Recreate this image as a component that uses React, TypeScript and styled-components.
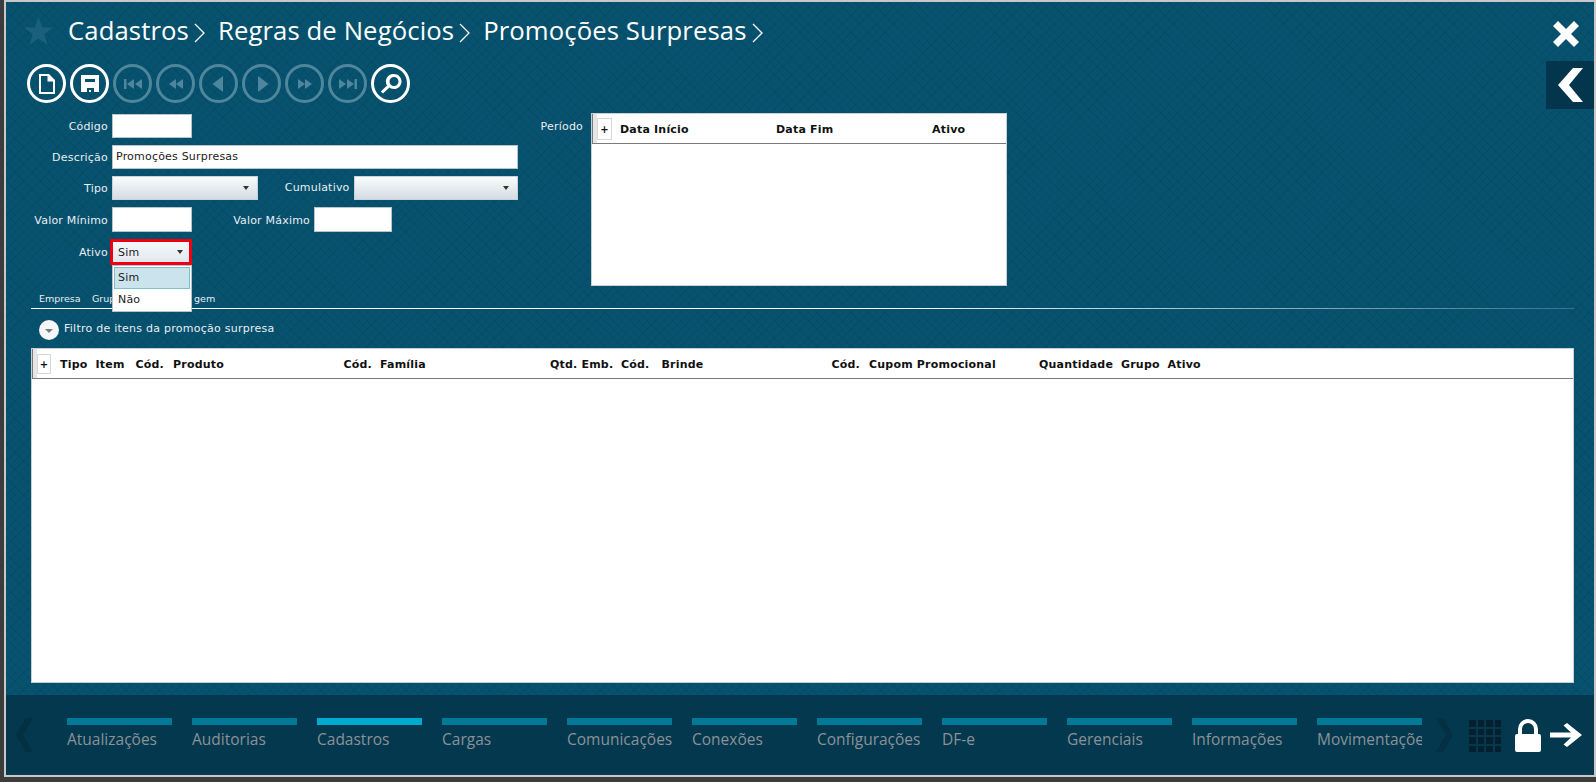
import * as React from 'react';
import styled, { createGlobalStyle } from 'styled-components';

const Global = createGlobalStyle`
  html, body { margin: 0; padding: 0; background: #3a3a3a; }
  * { box-sizing: border-box; }
`;

const Screen = styled.div`
  width: 1596px;
  height: 782px;
  padding: 0 0 5px 4px;
  background: #3c3c3c;
  font-family: 'DejaVu Sans', sans-serif;
  overflow: hidden;
`;
const Frame = styled.div`
  height: 100%;
  display: flex;
  flex-direction: column;
  border: 2px solid #c8c8c8;
  background-color: #06526f;
  background-image:
    repeating-linear-gradient(45deg, rgba(0, 40, 60, 0.11) 0 1px, transparent 1px 6px),
    repeating-linear-gradient(-45deg, rgba(0, 40, 60, 0.11) 0 1px, transparent 1px 6px);
`;
const Main = styled.div`
  flex: 1;
  position: relative;
  display: flex;
  flex-direction: column;
  padding: 0 20px 12px 25px;
  min-height: 0;
`;
const TitleBar = styled.div`
  height: 56px;
  display: flex;
  align-items: center;
  margin-left: -8px;
`;
const Crumb = styled.span`
  font-family: 'Open Sans', sans-serif;
  font-size: 25.7px;
  letter-spacing: 0.1px;
  color: #fff;
  margin-right: 5px;
`;
const CrumbSep = styled.svg`
  width: 11px;
  height: 20px;
  margin-right: 13px;
  margin-top: 6px;
  fill: none;
  stroke: #fff;
  stroke-width: 1.3;
`;
const Star = styled.svg`
  width: 31px;
  height: 31px;
  margin-right: 14px;
  margin-top: 3px;
  fill: #1a5f7c;
`;
const Toolbar = styled.div`
  display: flex;
  gap: 4px;
  height: 39px;
  margin-top: 6px;
  margin-left: -4px;
`;
const RoundButton = styled.button<{ $off?: boolean }>`
  width: 39px;
  height: 39px;
  padding: 0;
  border-radius: 50%;
  background: transparent;
  border: 3px solid ${p => (p.$off ? '#4f869c' : '#fff')};
  display: flex;
  align-items: center;
  justify-content: center;
  svg {
    display: block;
    fill: ${p => (p.$off ? '#4f869c' : '#fff')};
  }
`;
const CloseButton = styled.svg`
  position: absolute;
  top: 19px;
  right: 15px;
  width: 26px;
  height: 26px;
  fill: #fff;
`;
const SideTab = styled.div`
  position: absolute;
  top: 59px;
  right: 0;
  width: 48px;
  height: 48px;
  background: #03364c;
  display: flex;
  align-items: center;
  justify-content: center;
  svg {
    width: 25px;
    height: 34px;
    fill: #fff;
  }
`;
const Upper = styled.div`
  display: flex;
  height: 176px;
  margin-top: 10px;
`;
const FormCol = styled.div`
  width: 487px;
  display: flex;
  flex-direction: column;
  gap: 7px;
  padding-top: 1px;
`;
const FormRow = styled.div<{ $h: number }>`
  display: flex;
  align-items: center;
  height: ${p => p.$h}px;
`;
const Label = styled.label<{ $w?: number; $up?: boolean }>`
  width: ${p => p.$w ?? 81}px;
  padding-right: 4px;
  padding-top: ${p => (p.$up ? 0 : 1)}px;
  padding-bottom: ${p => (p.$up ? 2 : 0)}px;
  text-align: right;
  font-size: 11px;
  letter-spacing: 0.2px;
  color: #e8eef2;
  white-space: nowrap;
  flex: none;
`;
const TextBox = styled.div<{ $w: number }>`
  width: ${p => p.$w}px;
  height: 100%;
  background: #fff;
  border: 1px solid #b9c4cc;
  font-size: 11px;
  letter-spacing: 0.2px;
  line-height: 22px;
  padding-left: 3px;
  color: #222;
`;
const Select = styled.div<{ $w: number }>`
  width: ${p => p.$w}px;
  height: 100%;
  border: 1px solid #c8d2d8;
  background: linear-gradient(#fafcfc, #d3dde3);
  display: flex;
  align-items: center;
  justify-content: flex-end;
  padding-right: 8px;
`;
const Caret = styled.i`
  display: block;
  width: 0;
  height: 0;
  border-left: 3.5px solid transparent;
  border-right: 3.5px solid transparent;
  border-top: 4px solid #333;
`;
const AtivoSelect = styled.div`
  width: 82px;
  height: 26px;
  margin-left: -2px;
  border: 3px solid #ee0010;
  background: linear-gradient(#f6f8fb, #e2e8f0);
  display: flex;
  align-items: center;
  justify-content: space-between;
  padding: 0 6px 0 5px;
  font-size: 11px;
  letter-spacing: 0.2px;
  color: #222;
`;
const Dropdown = styled.div`
  position: absolute;
  left: 106px;
  top: 263px;
  width: 80px;
  height: 47px;
  z-index: 3;
  background: #fff;
  border: 1px solid #b8c2c8;
  padding: 1px;
  font-size: 11px;
  letter-spacing: 0.2px;
  color: #222;
`;
const DropItem = styled.div<{ $on?: boolean }>`
  height: 22px;
  line-height: 20px;
  padding-left: 3px;
  border: 1px solid ${p => (p.$on ? '#7fc0cf' : 'transparent')};
  background: ${p => (p.$on ? '#cbe3ec' : 'transparent')};
`;
const PeriodoCol = styled.div`
  display: flex;
  align-items: flex-start;
`;
const PeriodoLabel = styled.span`
  width: 73px;
  margin-top: 7px;
  padding-right: 8px;
  text-align: right;
  font-size: 11px;
  letter-spacing: 0.2px;
  color: #e8eef2;
`;
const Grid = styled.div<{ $w?: number; $h?: number }>`
  background: #fff;
  border: 1px solid #c8d0d4;
  width: ${p => (p.$w ? `${p.$w}px` : 'auto')};
  height: ${p => (p.$h ? `${p.$h}px` : 'auto')};
  flex: ${p => (p.$h ? 'none' : 1)};
`;
const GridHead = styled.div`
  height: 30px;
  border-bottom: 1px solid #7b7b7b;
  border-left: 1px solid #7b7b7b;
  display: flex;
  align-items: center;
  padding-left: 4px;
  box-shadow: inset 4px 0 0 #e6e6e6;
`;
const AddCell = styled.span<{ $small?: boolean }>`
  width: ${p => (p.$small ? 14 : 15)}px;
  height: ${p => (p.$small ? 20 : 22)}px;
  margin-right: ${p => (p.$small ? 9 : 8)}px;
  flex: none;
  border: 1px solid #d8d8d8;
  background: #fff;
  font-size: 10px;
  font-weight: 700;
  color: #111;
  text-align: center;
  line-height: ${p => (p.$small ? 20 : 22)}px;
`;
const HeadCell = styled.span<{ $w: number }>`
  width: ${p => p.$w}px;
  flex: none;
  font-size: 11px;
  letter-spacing: 0.2px;
  font-weight: 700;
  color: #111;
  white-space: nowrap;
  padding-top: 1px;
`;
const Tabs = styled.div`
  display: flex;
  height: 20px;
  align-items: center;
  padding-left: 8px;
  font-size: 9.5px;
  color: #e8eef2;
  border-bottom: 1px solid transparent;
  border-image: linear-gradient(90deg, #fff 0, #fff 55%, rgba(255, 255, 255, 0.2) 100%) 1;
`;
const Tab = styled.span<{ $w: number }>`
  width: ${p => p.$w}px;
  flex: none;
  white-space: nowrap;
`;
const FilterRow = styled.div`
  display: flex;
  align-items: center;
  gap: 5px;
  height: 20px;
  margin: 11px 0 8px 8px;
  font-size: 11px;
  letter-spacing: 0.25px;
  color: #e8eef2;
`;
const FilterText = styled.span`
  margin-bottom: 4px;
`;
const FilterToggle = styled.span`
  width: 20px;
  height: 20px;
  border-radius: 50%;
  background: #f4f6f7;
  display: flex;
  align-items: center;
  justify-content: center;
  i {
    display: block;
    border-left: 4px solid transparent;
    border-right: 4px solid transparent;
    border-top: 4px solid #6f7f88;
    margin-top: 2px;
  }
`;
const Dock = styled.div`
  height: 80px;
  flex: none;
  background: #03384f;
  display: flex;
  padding: 23px 0 0 10px;
`;
const DockArrow = styled.svg<{ $flip?: boolean }>`
  width: 17px;
  height: 34px;
  flex: none;
  fill: #052f43;
  transform: ${p => (p.$flip ? 'scaleX(-1)' : 'none')};
`;
const DockItems = styled.div`
  display: flex;
  gap: 20px;
  margin-left: 34px;
  width: 1355px;
  flex: none;
`;
const DockItem = styled.div<{ $on?: boolean }>`
  width: 105px;
  flex: none;
  overflow: hidden;
  font-family: 'Open Sans', sans-serif;
  font-size: 15.5px;
  line-height: 20px;
  color: #8a9297;
  white-space: nowrap;
  &::before {
    content: '';
    display: block;
    height: 7px;
    margin-bottom: 4px;
    background: ${p => (p.$on ? '#00a9ce' : '#007a96')};
  }
`;
const DockTools = styled.div`
  display: flex;
  align-items: flex-start;
  flex: none;
  margin-left: 14px;
`;
const Waffle = styled.div`
  display: grid;
  grid-template-columns: repeat(4, 6.500px);
  grid-auto-rows: 6.500px;
  gap: 2px;
  margin: 2px 14px 0 16px;
  span { background: #04202e; }
`;
const Lock = styled.svg`
  width: 26px;
  height: 33px;
  margin-top: 1px;
  fill: #fff;
`;
const ExitArrow = styled.svg`
  width: 32px;
  height: 24px;
  margin: 5px 0 0 9px;
  fill: #fff;
`;

const Ic = (d: string) => (
  <svg width="22" height="22" viewBox="0 0 22 22">
    <path d={d} />
  </svg>
);

const navIcons = [
  'M2 6h2.500v10H2zM12 6v10l-7-5zM20 6v10l-7-5z',
  'M11 6v10l-7-5zM18 6v10l-7-5z',
  'M15 3v16L4.500 11z',
  'M7 3v16l10.500-8z',
  'M4 6v10l7-5zM11 6v10l7-5z',
  'M2 6v10l7-5zM10 6v10l7-5zM17.500 6H20v10h-2.500z',
];

const periodoHead = [
  ['Data Início', 156],
  ['Data Fim', 156],
  ['Ativo', 60],
] as const;

const itensHead = [
  ['Tipo', 35.5],
  ['Item', 40],
  ['Cód.', 37.5],
  ['Produto', 170.5],
  ['Cód.', 36.5],
  ['Família', 170],
  ['Qtd. Emb.', 71],
  ['Cód.', 40.5],
  ['Brinde', 170],
  ['Cód.', 37.5],
  ['Cupom Promocional', 170],
  ['Quantidade', 82],
  ['Grupo', 46.5],
  ['Ativo', 50],
] as const;

const modulos = [
  'Atualizações',
  'Auditorias',
  'Cadastros',
  'Cargas',
  'Comunicações',
  'Conexões',
  'Configurações',
  'DF-e',
  'Gerenciais',
  'Informações',
  'Movimentações',
];

function Sep() {
  return (
    <CrumbSep viewBox="0 0 11 20">
      <path d="M1 1l9 9-9 9" />
    </CrumbSep>
  );
}

export default function App() {
  return (
    <Screen>
      <Global />
      <Frame>
        <Main>
          <TitleBar>
            <Star viewBox="0 0 34 34">
              <path d="M17 1l4.200 11.600H33l-9.600 7.200 3.600 12L17 24.600 7 31.800l3.600-12L1 12.600h11.800z" />
            </Star>
            <Crumb>Cadastros</Crumb>
            <Sep />
            <Crumb>Regras de Negócios</Crumb>
            <Sep />
            <Crumb>Promoções Surpresas</Crumb>
            <Sep />
          </TitleBar>
          <CloseButton viewBox="0 0 26 26">
            <path d="M5 0l8 8 8-8 5 5-8 8 8 8-5 5-8-8-8 8-5-5 8-8-8-8z" />
          </CloseButton>
          <SideTab>
            <svg viewBox="0 0 25 34">
              <path d="M15 0h10L11 17l14 17H15L0 17z" />
            </svg>
          </SideTab>
          <Toolbar>
            <RoundButton>
              <svg width="16" height="20" viewBox="0 0 16 20">
                <path
                  fillRule="evenodd"
                  d="M0 0h10l6 6v14H0zM2 2v16h12V7.500H8.500V2z"
                />
              </svg>
            </RoundButton>
            <RoundButton>
              <svg width="18" height="17" viewBox="0 0 18 17">
                <path
                  fillRule="evenodd"
                  d="M0 0h18v17H0zM4 4v3h10V4zM6 13v4h7v-4zM8 15h2v2H8z"
                />
              </svg>
            </RoundButton>
            {navIcons.map(d => (
              <RoundButton $off key={d}>
                {Ic(d)}
              </RoundButton>
            ))}
            <RoundButton>
              <svg width="24" height="24" viewBox="0 0 24 24">
                <path
                  fillRule="evenodd"
                  d="M15 2a7.500 7.500 0 1 1-4.600 13.400L4 21.500 1.800 19.500l6.300-6A7.500 7.500 0 0 1 15 2zm0 3a4.500 4.500 0 1 0 0 9 4.500 4.500 0 0 0 0-9z"
                />
              </svg>
            </RoundButton>
          </Toolbar>
          <Upper>
            <FormCol>
              <FormRow $h={24}>
                <Label>Código</Label>
                <TextBox $w={80} />
              </FormRow>
              <FormRow $h={24}>
                <Label>Descrição</Label>
                <TextBox $w={407}>Promoções Surpresas</TextBox>
              </FormRow>
              <FormRow $h={24}>
                <Label>Tipo</Label>
                <Select $w={146}>
                  <Caret />
                </Select>
                <Label $w={96} $up>
                  Cumulativo
                </Label>
                <Select $w={165}>
                  <Caret />
                </Select>
              </FormRow>
              <FormRow $h={25}>
                <Label>Valor Mínimo</Label>
                <TextBox $w={80} />
                <Label $w={122}>Valor Máximo</Label>
                <TextBox $w={78} />
              </FormRow>
              <FormRow $h={26}>
                <Label>Ativo</Label>
                <AtivoSelect>
                  Sim
                  <Caret />
                </AtivoSelect>
              </FormRow>
            </FormCol>
            <PeriodoCol>
              <PeriodoLabel>Período</PeriodoLabel>
              <Grid $w={416} $h={173}>
                <GridHead>
                  <AddCell>+</AddCell>
                  {periodoHead.map(([t, w]) => (
                    <HeadCell key={t} $w={w}>
                      {t}
                    </HeadCell>
                  ))}
                </GridHead>
              </Grid>
            </PeriodoCol>
          </Upper>
          <Dropdown>
            <DropItem $on>Sim</DropItem>
            <DropItem>Não</DropItem>
          </Dropdown>
          <Tabs>
            <Tab $w={53}>Empresa</Tab>
            <Tab $w={102}>Grupo</Tab>
            <Tab $w={30}>gem</Tab>
          </Tabs>
          <FilterRow>
            <FilterToggle>
              <i />
            </FilterToggle>
            <FilterText>Filtro de itens da promoção surpresa</FilterText>
          </FilterRow>
          <Grid>
            <GridHead>
              <AddCell $small>+</AddCell>
              {itensHead.map(([t, w], i) => (
                <HeadCell key={i} $w={w}>
                  {t}
                </HeadCell>
              ))}
            </GridHead>
          </Grid>
        </Main>
        <Dock>
          <DockArrow viewBox="0 0 17 34">
            <path d="M10 0h7L7 17l10 17h-7L0 17z" />
          </DockArrow>
          <DockItems>
            {modulos.map(m => (
              <DockItem key={m} $on={m === 'Cadastros'}>
                {m}
              </DockItem>
            ))}
          </DockItems>
          <DockTools>
            <DockArrow $flip viewBox="0 0 17 34">
              <path d="M10 0h7L7 17l10 17h-7L0 17z" />
            </DockArrow>
            <Waffle>
              {Array.from({ length: 16 }, (_, i) => (
                <span key={i} />
              ))}
            </Waffle>
            <Lock viewBox="0 0 26 33">
              <path
                fillRule="evenodd"
                d="M3 15V10a10 10 0 0 1 20 0v5h1a2 2 0 0 1 2 2v14a2 2 0 0 1-2 2H2a2 2 0 0 1-2-2V17a2 2 0 0 1 2-2zM7 15h12V10a6 6 0 0 0-12 0z"
              />
            </Lock>
            <ExitArrow viewBox="0 0 32 24">
              <path d="M0 9.500h21L13.500 2.500 17 0l15 12-15 12-3.500-2.500 7.500-7H0z" />
            </ExitArrow>
          </DockTools>
        </Dock>
      </Frame>
    </Screen>
  );
}
